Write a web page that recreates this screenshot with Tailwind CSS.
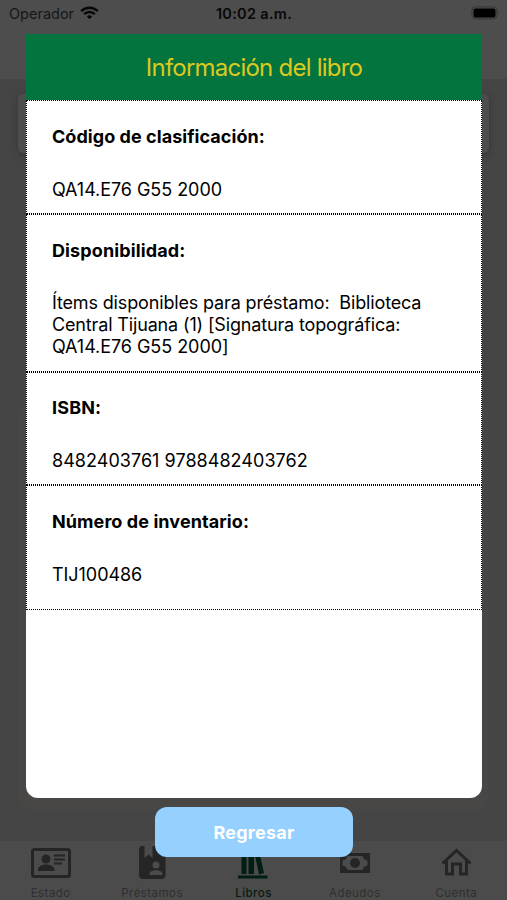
<!DOCTYPE html>
<html lang="es">
<head>
<meta charset="utf-8">
<title>Información del libro</title>
<script src="https://cdn.jsdelivr.net/npm/@tailwindcss/browser@4"></script>
</head>
<body class="font-['Inter','Liberation_Sans',sans-serif]">
<div class="relative flex flex-col w-[507px] h-[900px] overflow-hidden bg-[#454545] text-black">
  <header class="h-[79px] shrink-0 bg-[#4d4d4d]">
    <div class="flex h-7 items-center justify-between pl-[9px] pr-[6px]">
      <div class="flex w-[200px] items-center gap-[6px]">
        <span class="text-[14.5px] leading-7 text-[#161616]">Operador</span>
        <svg class="h-[14px] w-[19px] -translate-y-px" viewBox="0 0 19 14" fill="none" stroke="#080808" stroke-width="2.6"><path d="M1.2 5.2a11.8 11.8 0 0 1 16.6 0M4.2 8.2a7.5 7.5 0 0 1 10.6 0"/><path d="M9.5 13.2 6.8 10.5a3.9 3.9 0 0 1 5.4 0z" fill="#080808" stroke="none"/></svg>
      </div>
      <span class="text-[14.5px] leading-7 font-semibold tracking-[.3px] text-[#080808] whitespace-nowrap">10:02 a.m.</span>
      <div class="flex w-[202px] justify-end">
        <svg class="h-[14px] w-[30px] -translate-y-px" viewBox="0 0 30 14"><rect x=".9" y=".9" width="25" height="12" rx="3.5" fill="none" stroke="#353535"/><rect x="2.5" y="2.5" width="22" height="9" rx="2" fill="#000"/><path d="M27.5 5.2q1.8 1.8 0 3.6z" fill="#353535"/></svg>
      </div>
    </div>
  </header>
  <main class="flex flex-1 flex-col px-[18px] pt-[15px] pb-[31px]">
    <div class="h-[59px] rounded-[5px] bg-[#4d4d4d] shadow-[0_2px_7px_#353535]"></div>
    <div class="mt-[257px] flex-1 rounded-b-[14px] bg-[#484745]"></div>
  </main>
  <nav class="grid h-[59px] shrink-0 grid-cols-5 bg-[#4b4b4b] text-[11.5px] tracking-[.45px] text-[#2f2f2f]">
    <div class="flex flex-col items-center pt-[7px]">
      <svg class="h-[30px] w-[40px]" viewBox="0 0 40 30" fill="#252525"><rect x="1.5" y="1.5" width="37" height="27" rx="2" fill="none" stroke="#252525" stroke-width="3"/><circle cx="15" cy="11" r="4.5"/><path d="M7 23v-1.5c0-3.5 5-5 8-5s8.500 1.500 8.500 5V23z"/><path d="M23 6.500h11v2H23zM23 10.500h11v2H23zM23 14.500h8v2h-8z"/></svg>
      <span class="mt-[7px] leading-4">Estado</span>
    </div>
    <div class="flex flex-col items-center pt-[4px]">
      <svg class="h-[34px] w-[27px]" viewBox="0 0 27 34"><path fill="#252525" d="M4 1h1.500v12l4-3.500 4 3.500V1h9q4 0 4 4v25q0 4-4 4H4q-4 0-4-4V5q0-4 4-4z"/><circle cx="17" cy="20" r="3.500" fill="#4b4b4b"/><path fill="#4b4b4b" d="M10.500 30v-1c0-5 13-5 13 0v1z"/></svg>
      <span class="mt-[6px] leading-4">Préstamos</span>
    </div>
    <div class="flex flex-col items-center pt-[4px]">
      <svg class="h-[34px] w-[30px]" viewBox="0 0 30 34" fill="#001e12"><path d="M3.500 4h5v25h-5zM10.500 4h5.500v25h-5.500zM16 5.500l4.500-1.500 5.500 24-5 1.500zM0 30.500h29.500v3H0z"/></svg>
      <span class="mt-[6px] font-medium leading-4 text-[#071a12]">Libros</span>
    </div>
    <div class="flex flex-col items-center pt-[12px]">
      <svg class="h-[20px] w-[30px]" viewBox="0 0 30 20"><path fill="#252525" d="M0 0h30v20H0z"/><path fill="#4b4b4b" d="M7.500 3h15q1 4 5 4.500v5q-4 .5-5 4.500h-15q-1-4-5-4.500v-5q4-.5 5-4.500z"/><circle cx="15" cy="10" r="5" fill="#252525"/></svg>
      <span class="mt-[12px] leading-4">Adeudos</span>
    </div>
    <div class="flex flex-col items-center pt-[7px]">
      <svg class="h-[30px] w-[31px]" viewBox="0 0 31 30" fill="none" stroke="#252525" stroke-width="3"><path d="M1.500 15.500 15.500 2.500l14 13M5.500 13v13h6v-10h8v10h6V13"/></svg>
      <span class="mt-[7px] leading-4">Cuenta</span>
    </div>
  </nav>

  <section class="absolute left-[26px] top-[34px] flex h-[764px] w-[456px] flex-col overflow-hidden rounded-b-[12px] bg-white" role="dialog">
    <h1 class="h-[66px] shrink-0 bg-[#04743f] text-center text-[24px] leading-[68px] tracking-[-0.77px] text-[#dcc91f]"><span>Información del libro</span></h1>
    <div class="flex h-[114px] shrink-0 flex-col gap-[31px] border border-dotted border-black px-[25px] pt-[25px] text-[18px] leading-[22px]">
      <h2 class="font-bold tracking-[.05px]"><span>Código de clasificación:</span></h2>
      <p class="tracking-[-.05px]"><span>QA14.E76 G55 2000</span></p>
    </div>
    <div class="flex h-[158px] shrink-0 flex-col gap-[30px] border border-dotted border-black px-[25px] pt-[25px] text-[18px] leading-[22px]">
      <h2 class="font-bold tracking-[.12px]"><span>Disponibilidad:</span></h2>
      <p class="whitespace-nowrap tracking-[-.15px]">Ítems disponibles para préstamo:&nbsp; Biblioteca<br>Central Tijuana (1) [Signatura topográfica:<br><span class="tracking-[-.05px]">QA14.E76 G55 2000]</span></p>
    </div>
    <div class="flex h-[113px] shrink-0 flex-col gap-[31px] border border-dotted border-black px-[25px] pt-[24px] text-[18px] leading-[22px]">
      <h2 class="font-bold tracking-[.15px]"><span>ISBN:</span></h2>
      <p class="tracking-[.04px]"><span>8482403761 9788482403762</span></p>
    </div>
    <div class="flex h-[125px] shrink-0 flex-col gap-[31px] border border-dotted border-black px-[25px] pt-[25px] text-[18px] leading-[22px]">
      <h2 class="font-bold tracking-[.08px]"><span>Número de inventario:</span></h2>
      <p class="tracking-[-.05px]"><span>TIJ100486</span></p>
    </div>
  </section>
  <button class="absolute left-[155px] top-[807px] h-[50px] w-[198px] rounded-[12px] bg-[#95d0ff] pt-px text-[18px] font-bold tracking-[.25px] text-white">Regresar</button>
</div>
</body>
</html>
